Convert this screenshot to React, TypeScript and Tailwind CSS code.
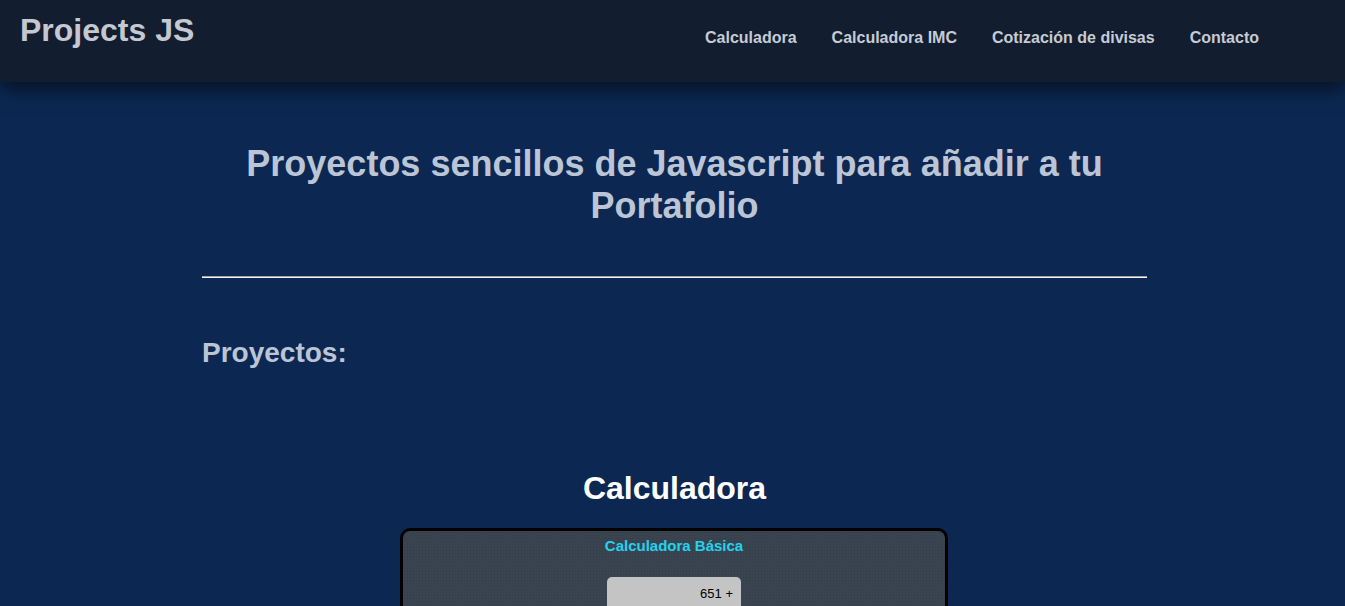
import React from "react";

const font = { fontFamily: '"Liberation Sans", Arial, sans-serif' };

export default function App() {
  return (
    <div style={font} className="min-h-screen bg-[#0c2852]">
      <header className="relative z-10 h-[82px] bg-[#121d2f] shadow-[0_8px_18px_rgba(0,0,0,0.55)] flex items-start justify-between">
        <h1 className="ml-[20px] mt-[12px] text-[32px] leading-[normal] font-bold text-[#c3c8d1]">Projects JS</h1>
        <nav className="mt-[29px] mr-[86px] flex gap-[35px] text-[16px] leading-[normal] font-bold text-[#c6cbd4]">
          <a>Calculadora</a>
          <a>Calculadora IMC</a>
          <a>Cotización de divisas</a>
          <a>Contacto</a>
        </nav>
      </header>
      <main className="flex justify-center pl-[4px]">
        <div className="w-[945px] flex flex-col">
          <h2 className="mt-[61px] text-center text-[36px] leading-[normal] font-bold text-[#bcc5d5]">
            Proyectos sencillos de Javascript para añadir a tu Portafolio
          </h2>
          <div className="mt-[49px] h-[2px] border-t border-[#a0a4ab] bg-[#f2f2f2]"></div>
          <h3 className="mt-[59px] text-[28px] leading-[normal] font-bold text-[#bcc5d5]">Proyectos:</h3>
          <h3 className="mt-[101px] text-center text-[32px] leading-[normal] font-bold text-white">Calculadora</h3>
          <div className="mt-[21px] ml-[198px] w-[548px] h-[120px] border-[3px] border-black rounded-[10px] bg-[#3a4451] bg-[radial-gradient(rgba(0,0,0,0.12)_1px,transparent_1px)] bg-[length:3px_3px] flex flex-col items-center">
            <p className="pt-[6px] text-[15px] leading-[normal] font-bold text-[#22d3ee]">Calculadora Básica</p>
            <div className="mt-[23px] w-[134px] h-[60px] rounded-t-[5px] bg-[#c4c4c4] text-right pr-[8px] pt-[9px] text-[13px] leading-[normal] text-black">
              651 +
            </div>
          </div>
        </div>
      </main>
    </div>
  );
}
